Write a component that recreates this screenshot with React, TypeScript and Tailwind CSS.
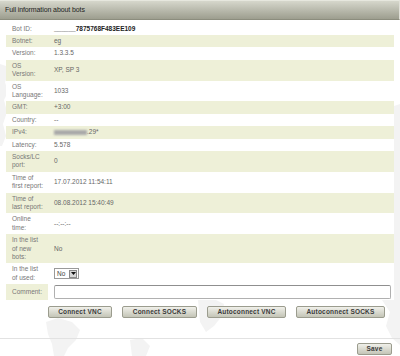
import React from "react";

type Row = { label: string[]; value: React.ReactNode; hl: boolean; labelOnlyHl?: boolean; tight?: boolean };

const Select = () => (
  <div className="flex items-center h-[11px] w-[25px] border border-[#9a9a9a] bg-white">
    <span className="flex-1 pl-[2px] text-[6.5px] leading-[9px] text-[#444]">No</span>
    <span className="flex items-center justify-center w-[8px] h-[8px] mr-[1px] bg-[#d8d8d8] border border-[#8a8a8a]">
      <svg width="5" height="3" viewBox="0 0 5 3">
        <path d="M0 0 L5 0 L2.5 3 Z" fill="#111" />
      </svg>
    </span>
  </div>
);

const rows: Row[] = [
  { label: ["Bot ID:"], value: <span className="font-bold text-[#222]">______7875768F483EE109</span>, hl: false },
  { label: ["Botnet:"], value: "eg", hl: true },
  { label: ["Version:"], value: "1.3.3.5", hl: false },
  { label: ["OS", "Version:"], value: "XP, SP 3", hl: true },
  { label: ["OS", "Language:"], value: "1033", hl: false },
  { label: ["GMT:"], value: "+3:00", hl: true },
  { label: ["Country:"], value: "--", hl: false },
  {
    label: ["IPv4:"],
    value: (
      <span className="flex items-center">
        <span className="inline-block w-[33px] h-[5px] bg-[#a9a9a9] blur-[0.8px]" />
        <span>.29*</span>
      </span>
    ),
    hl: true,
  },
  { label: ["Latency:"], value: "5.578", hl: false },
  { label: ["Socks/LC", "port:"], value: "0", hl: true },
  { label: ["Time of", "first report:"], value: "17.07.2012 11:54:11", hl: false },
  { label: ["Time of", "last report:"], value: "08.08.2012 15:40:49", hl: true },
  { label: ["Online", "time:"], value: "--:--:--", hl: false },
  { label: ["In the list", "of new", "bots:"], value: "No", hl: true },
  { label: ["In the list", "of used:"], value: <Select />, hl: false },
  {
    label: ["Comment:"],
    value: <div className="h-[14px] w-[337px] border border-[#b0b0b0] border-t-[#8f8f8f] rounded-[2px] bg-white" />,
    hl: true,
    labelOnlyHl: true,
    tight: true,
  },
];

const Btn = ({ children, w }: { children: React.ReactNode; w: string }) => (
  <div
    className={`${w} h-[12px] flex items-center justify-center border border-[#9b9c8e] rounded-[2px] bg-gradient-to-b from-[#f0f0ea] to-[#c4c5b7] text-[6.5px] font-bold text-[#3a3a3a] tracking-[0.2px]`}
  >
    {children}
  </div>
);

export default function App() {
  return (
    <div className="relative w-[400px] h-[356px] overflow-hidden bg-white font-['Liberation_Sans',Arial,sans-serif]">
      <svg className="absolute inset-0 z-0" width="400" height="356" viewBox="0 0 400 356">
        <g fill="#f3f3f3">
          <path d="M0 64 L6 66 L9 74 L5 82 L8 92 L4 100 L7 112 L3 124 L6 136 L2 146 L0 146 Z" />
          <path d="M394 106 L400 104 L400 250 L394 248 Z" />
          <path d="M384 238 L394 236 L400 244 L400 345 L392 338 L386 326 L390 312 L382 300 L386 286 L380 270 L386 256 Z" />
          <path d="M46 322 L58 318 L72 322 L80 330 L76 340 L68 348 L64 356 L54 356 L52 344 L48 334 Z" />
          <path d="M198 300 L212 298 L224 304 L222 316 L214 326 L206 332 L200 322 Z" />
          <path d="M130 340 L142 338 L150 346 L146 356 L132 356 Z" />
        </g>
      </svg>

      <div className="relative z-10 flex flex-col">
        <div className="h-[20px] w-full flex items-center pl-[5px] bg-gradient-to-b from-[#d6d7cc] to-[#9d9e8f] border-t border-t-[#e6e7de] border-b border-b-[#8c8d7e] border-r border-r-[#e0e0d8]">
          <span className="text-[7px] text-[#222] tracking-[-0.1px]">Full information about bots</span>
        </div>

        <div className="mt-[2.5px] ml-[6px] w-[388px] flex flex-col">
          {rows.map((r, i) => (
            <div
              key={i}
              className={`flex items-center ${r.hl && !r.labelOnlyHl ? "bg-[#eef0d8]" : "bg-white"}`}
            >
              <div
                className={`w-[42px] shrink-0 self-stretch flex items-center pl-[6px] ${r.tight ? "py-[1px]" : "py-[2px]"} ${
                  r.labelOnlyHl ? "bg-[#eef0d8]" : ""
                } text-[6.5px] leading-[8.4px] text-[#777] whitespace-nowrap`}
              >
                <div>
                  {r.label.map((l, j) => (
                    <div key={j}>{l}</div>
                  ))}
                </div>
              </div>
              <div className={`flex-1 pl-[6px] ${r.tight ? "py-[1px]" : "py-[2px]"} text-[6.5px] leading-[8.4px] text-[#666] whitespace-nowrap`}>
                {r.value}
              </div>
            </div>
          ))}
        </div>

        <div className="mt-[6px] pl-[48px] flex gap-[10px]">
          <Btn w="w-[64px]">Connect VNC</Btn>
          <Btn w="w-[75px]">Connect SOCKS</Btn>
          <Btn w="w-[79px]">Autoconnect VNC</Btn>
          <Btn w="w-[89px]">Autoconnect SOCKS</Btn>
        </div>

        <div className="mt-[20px] h-[1px] w-full bg-[#e2e2e2]" />

        <div className="mt-[4px] flex justify-end pr-[8px]">
          <Btn w="w-[35px]">Save</Btn>
        </div>
      </div>
    </div>
  );
}
